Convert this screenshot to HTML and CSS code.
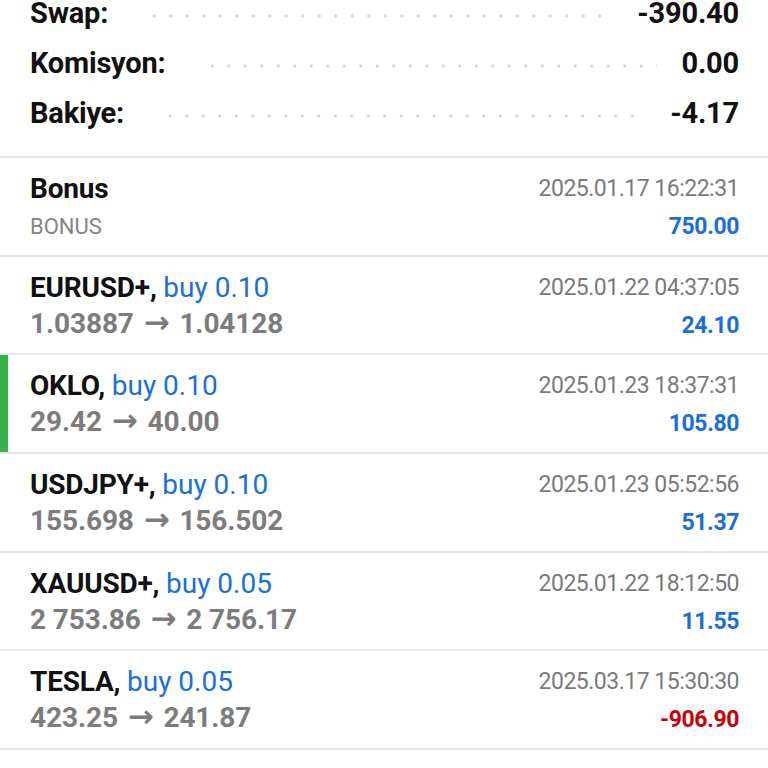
FILE: index.html
```html
<!DOCTYPE html>
<html>
<head>
    <title>Geçmiş</title>
    <link rel="stylesheet" href="styles.css">
</head>
<body>
    <!-- Summary -->
    <div class="summary">
        <div class="sum-row">
            <span class="sum-label">Swap:</span>
            <span class="dots"></span>
            <span class="sum-value">-390.40</span>
        </div>
        <div class="sum-row">
            <span class="sum-label">Komisyon:</span>
            <span class="dots"></span>
            <span class="sum-value">0.00</span>
        </div>
        <div class="sum-row">
            <span class="sum-label">Bakiye:</span>
            <span class="dots"></span>
            <span class="sum-value">-4.17</span>
        </div>
    </div>

    <!-- Deals -->
    <div class="deals">
        <div class="deal">
            <div class="deal-left">
                <div class="deal-title">Bonus</div>
                <div class="deal-sub">BONUS</div>
            </div>
            <div class="deal-right">
                <div class="deal-time">2025.01.17 16:22:31</div>
                <div class="deal-profit">750.00</div>
            </div>
        </div>
        <div class="deal">
            <div class="deal-left">
                <div class="deal-title">EURUSD+, <span class="side">buy 0.10</span></div>
                <div class="deal-price">1.03887 <span class="arrow">→</span> 1.04128</div>
            </div>
            <div class="deal-right">
                <div class="deal-time">2025.01.22 04:37:05</div>
                <div class="deal-profit">24.10</div>
            </div>
        </div>
        <div class="deal selected">
            <div class="deal-left">
                <div class="deal-title">OKLO, <span class="side">buy 0.10</span></div>
                <div class="deal-price">29.42 <span class="arrow">→</span> 40.00</div>
            </div>
            <div class="deal-right">
                <div class="deal-time">2025.01.23 18:37:31</div>
                <div class="deal-profit">105.80</div>
            </div>
        </div>
        <div class="deal">
            <div class="deal-left">
                <div class="deal-title">USDJPY+, <span class="side">buy 0.10</span></div>
                <div class="deal-price">155.698 <span class="arrow">→</span> 156.502</div>
            </div>
            <div class="deal-right">
                <div class="deal-time">2025.01.23 05:52:56</div>
                <div class="deal-profit">51.37</div>
            </div>
        </div>
        <div class="deal">
            <div class="deal-left">
                <div class="deal-title">XAUUSD+, <span class="side">buy 0.05</span></div>
                <div class="deal-price">2 753.86 <span class="arrow">→</span> 2 756.17</div>
            </div>
            <div class="deal-right">
                <div class="deal-time">2025.01.22 18:12:50</div>
                <div class="deal-profit">11.55</div>
            </div>
        </div>
        <div class="deal">
            <div class="deal-left">
                <div class="deal-title">TESLA, <span class="side">buy 0.05</span></div>
                <div class="deal-price">423.25 <span class="arrow">→</span> 241.87</div>
            </div>
            <div class="deal-right">
                <div class="deal-time">2025.03.17 15:30:30</div>
                <div class="deal-profit loss">-906.90</div>
            </div>
        </div>
        <div class="deal"></div>
    </div>
</body>
</html>
```

FILE: styles.css
```css
body {
    margin: 0;
    background: #ffffff;
    font-family: Roboto, "Liberation Sans", sans-serif;
    color: #111111;
    height: 768px;
    overflow: hidden;
}

.summary {
    margin-top: -12px;
    padding: 0 29px 18px 30px;
}
.sum-row {
    display: flex;
    align-items: center;
    height: 50px;
}
.sum-label,
.sum-value {
    font-size: 29px;
    line-height: 24px;
    font-weight: bold;
    letter-spacing: -0.2px;
}
.dots {
    flex: 1;
    height: 6px;
    margin: 6px 24px 0 38px;
    background-image: radial-gradient(circle, #d6d6d6 1.4px, transparent 1.9px);
    background-size: 16.5px 6px;
    background-repeat: repeat-x;
}

.deals {
    border-top: 2px solid #e6e6e6;
}
.deal {
    display: flex;
    justify-content: space-between;
    box-sizing: border-box;
    height: 98.7px;
    padding: 13px 29px 0 30px;
    border-bottom: 2px solid #e6e6e6;
}
.deal.selected {
    box-shadow: inset 8px 0 0 #35b04a;
}
.deal-left div,
.deal-right div {
    height: 36px;
    line-height: 36px;
    white-space: nowrap;
}
.deal-right {
    text-align: right;
}
.deal-title {
    font-size: 28px;
    font-weight: bold;
    letter-spacing: -0.2px;
}
.side {
    font-weight: normal;
    color: #1b6fd6;
    letter-spacing: 0;
}
.deal-left .deal-sub {
    font-size: 22px;
    line-height: 40px;
    color: #858585;
}
.deal-price {
    font-size: 28px;
    font-weight: bold;
    color: #7c7c7c;
    letter-spacing: -0.1px;
}
.arrow {
    font-family: "DejaVu Sans", sans-serif;
    font-size: 31px;
    line-height: 1;
    margin: 0 3px;
}
.deal-time {
    font-size: 23px;
    color: #7a7a7a;
    letter-spacing: -0.5px;
}
.deal-right .deal-profit {
    font-size: 23px;
    line-height: 40px;
    font-weight: bold;
    color: #1a6ed8;
    letter-spacing: -0.4px;
}
.deal-profit.loss {
    color: #c8000a;
}
```
